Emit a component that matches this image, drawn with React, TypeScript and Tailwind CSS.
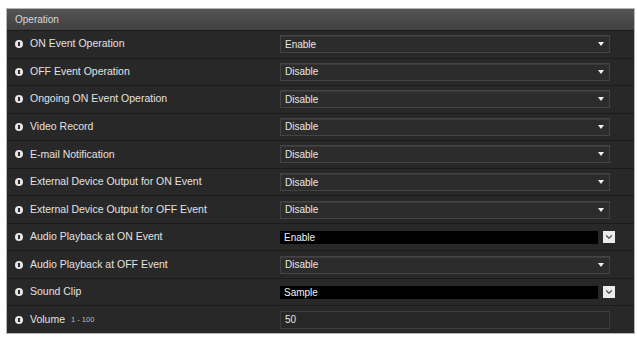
import { ChevronDown } from 'lucide-react';

type Row = {
  label: string;
  value: string;
  kind: 'select' | 'active' | 'input';
  hint?: string;
};

const rows: Row[] = [
  { label: 'ON Event Operation', value: 'Enable', kind: 'select' },
  { label: 'OFF Event Operation', value: 'Disable', kind: 'select' },
  { label: 'Ongoing ON Event Operation', value: 'Disable', kind: 'select' },
  { label: 'Video Record', value: 'Disable', kind: 'select' },
  { label: 'E-mail Notification', value: 'Disable', kind: 'select' },
  { label: 'External Device Output for ON Event', value: 'Disable', kind: 'select' },
  { label: 'External Device Output for OFF Event', value: 'Disable', kind: 'select' },
  { label: 'Audio Playback at ON Event', value: 'Enable', kind: 'active' },
  { label: 'Audio Playback at OFF Event', value: 'Disable', kind: 'select' },
  { label: 'Sound Clip', value: 'Sample', kind: 'active' },
  { label: 'Volume', value: '50', kind: 'input', hint: '1 - 100' },
];

function InfoIcon() {
  return (
    <span className="w-[8px] h-[8px] rounded-full bg-[#e6e6e6] flex items-center justify-center shrink-0">
      <span className="w-[2px] h-[4px] bg-[#2a2a2a]" />
    </span>
  );
}

function Field({ row }: { row: Row }) {
  if (row.kind === 'active') {
    return (
      <div className="flex items-center w-[335px] h-[13px]">
        <div className="flex-1 h-full bg-black text-[#f2f2f2] pl-[4px] flex items-center">{row.value}</div>
        <div className="ml-[5px] w-[12px] h-[12px] bg-[#ececec] flex items-center justify-center">
          <ChevronDown size={10} strokeWidth={3} color="#555" />
        </div>
      </div>
    );
  }
  if (row.kind === 'input') {
    return (
      <div className="w-[330px] h-[18px] bg-[#272727] border border-[#3c3c3c] text-[#e6e6e6] pl-[4px] flex items-center">
        {row.value}
      </div>
    );
  }
  return (
    <div className="w-[330px] h-[18px] bg-[#2c2c2c] border border-[#444] shadow-[inset_0_1px_0_#3a3a3a] text-[#e8e8e8] pl-[4px] pr-[5px] flex items-center justify-between">
      <span>{row.value}</span>
      <span className="w-0 h-0 border-l-[3px] border-r-[3px] border-t-[4px] border-l-transparent border-r-transparent border-t-[#f0f0f0]" />
    </div>
  );
}

export default function App() {
  return (
    <div className="w-[637px] h-[337px] bg-white pt-[8px] pl-[6px]" style={{ fontFamily: '"Liberation Sans", Arial, sans-serif' }}>
      <div className="w-[629px] h-[326px] border border-[#b5b5b5] bg-[#232323] flex flex-col text-[10px]">
        <div className="h-[22px] shrink-0 bg-gradient-to-b from-[#555] to-[#404040] text-[#d8d8d8] pl-[8px] flex items-center border-b border-[#1a1a1a]">
          Operation
        </div>
        {rows.map((row) => (
          <div key={row.label} className="flex-1 flex items-center bg-[#282828] border-b border-[#1b1b1b] last:border-b-0">
            <div className="w-[273px] pl-[8px] flex items-center gap-[7px] text-[#e2e2e2] text-[10.5px]">
              <InfoIcon />
              <span>{row.label}</span>
              {row.hint && <span className="ml-[-1px] text-[7.5px] text-[#bdbdbd]">{row.hint}</span>}
            </div>
            <Field row={row} />
          </div>
        ))}
      </div>
    </div>
  );
}
